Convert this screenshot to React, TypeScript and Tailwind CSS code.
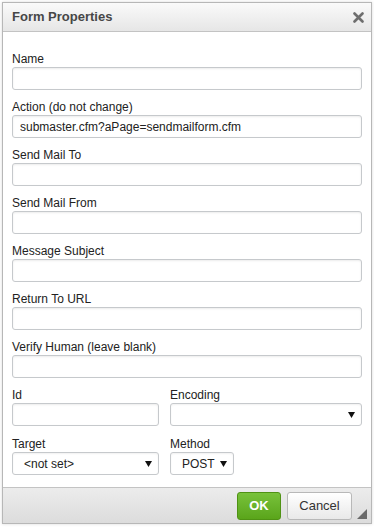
import React from 'react';

const labelCls = 'block text-[12px] leading-[16px] text-[#222]';
const inputCls =
    'block w-full h-[23px] bg-white border border-[#c6c9cc] rounded-[3px] shadow-[inset_0_1px_2px_rgba(0,0,0,0.08)] px-[7px] text-[12px] text-[#222] outline-none';

function Field({ label, value = '' }: { label: string; value?: string }) {
    return (
        <div className="mb-[9px]">
            <label className={labelCls}>{label}</label>
            <input className={inputCls} defaultValue={value} readOnly />
        </div>
    );
}

function Arrow() {
    return (
        <svg width="7" height="6" viewBox="0 0 7 6" className="shrink-0">
            <path d="M0 0 H7 L3.5 6 Z" fill="#111" />
        </svg>
    );
}

function FakeSelect({ value, width }: { value: string; width: string }) {
    return (
        <div
            className={`${width} h-[23px] bg-white border border-[#c6c9cc] rounded-[3px] shadow-[inset_0_1px_2px_rgba(0,0,0,0.06)] flex items-center justify-between pl-[11px] pr-[6px] text-[12px] text-[#222]`}
        >
            <span>{value}</span>
            <Arrow />
        </div>
    );
}

export default function App() {
    return (
        <div className="w-[374px] h-[527px] bg-white pt-[2px] pl-[2px] font-['Liberation_Sans',Arial,sans-serif]">
            <div className="w-[370px] h-[522px] border border-[#b7b7b7] flex flex-col shadow-[0_0_3px_rgba(0,0,0,0.15)]">
                {/* Header */}
                <div className="h-[29px] shrink-0 bg-gradient-to-b from-[#fafafa] to-[#e6e6e6] border-b border-[#c3c3c3] flex items-center justify-between pl-[9px] pr-[7px]">
                    <span className="text-[13px] font-bold text-[#474747]">Form Properties</span>
                    <svg width="11" height="11" viewBox="0 0 11 11">
                        <path d="M1.5 1.5 L9.5 9.5 M9.5 1.5 L1.5 9.5" stroke="#6e6e6e" strokeWidth="2.6" strokeLinecap="round" />
                    </svg>
                </div>

                {/* Body */}
                <div className="flex-1 bg-white px-[9px] pt-[19px]">
                    <Field label="Name" />
                    <Field label="Action (do not change)" value="submaster.cfm?aPage=sendmailform.cfm" />
                    <Field label="Send Mail To" />
                    <Field label="Send Mail From" />
                    <Field label="Message Subject" />
                    <Field label="Return To URL" />
                    <Field label="Verify Human (leave blank)" />

                    <div className="flex gap-[11px] mb-[10px]">
                        <div>
                            <label className={labelCls}>Id</label>
                            <input className={`${inputCls} !w-[147px]`} readOnly />
                        </div>
                        <div className="flex-1">
                            <label className={labelCls}>Encoding</label>
                            <FakeSelect value="" width="w-full" />
                        </div>
                    </div>

                    <div className="flex gap-[11px]">
                        <div>
                            <label className={labelCls}>Target</label>
                            <FakeSelect value="<not set>" width="w-[147px]" />
                        </div>
                        <div>
                            <label className={labelCls}>Method</label>
                            <FakeSelect value="POST" width="w-[64px]" />
                        </div>
                    </div>
                </div>

                {/* Footer */}
                <div className="h-[36px] shrink-0 bg-gradient-to-b from-[#ececec] to-[#dcdcdc] border-t border-[#c3c3c3] flex items-center justify-end pr-[19px] gap-[6px] relative">
                    <button className="h-[28px] w-[44px] rounded-[3px] border border-[#4f9214] bg-gradient-to-b from-[#78c23a] to-[#5aa51a] text-white text-[13px] font-bold">
                        OK
                    </button>
                    <button className="h-[28px] w-[65px] rounded-[3px] border border-[#b8b8b8] bg-gradient-to-b from-[#ffffff] to-[#e9e9e9] text-[#333] text-[13px]">
                        Cancel
                    </button>
                    <svg width="10" height="10" viewBox="0 0 10 10" className="absolute right-[4px] bottom-[4px]">
                        <path d="M10 0 V10 H0 Z" fill="#6a6a6a" />
                    </svg>
                </div>
            </div>
        </div>
    );
}
